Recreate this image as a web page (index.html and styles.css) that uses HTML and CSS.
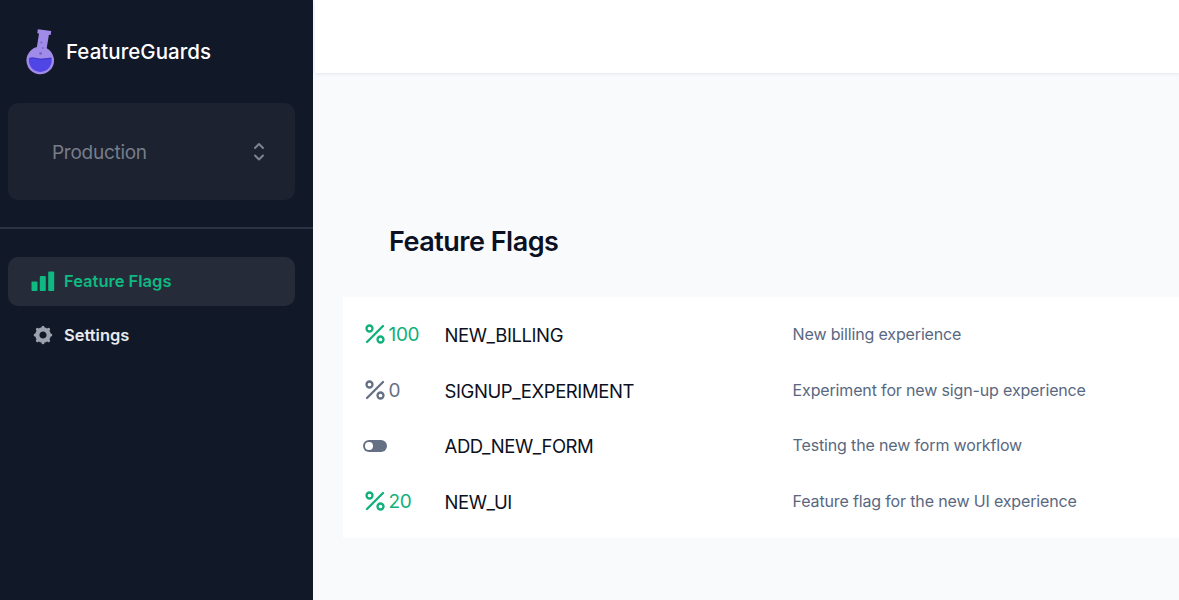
FILE: index.html
```html
<!DOCTYPE html>
<html lang="en">

<head>
    <meta charset="UTF-8">
    <meta name="viewport" content="width=device-width, initial-scale=1.0">
    <title>FeatureGuards</title>
    <link rel="stylesheet" href="styles.css">
</head>

<body>

    <!-- Icons shared by several rows -->
    <svg class="icon-defs" width="0" height="0">
        <symbol id="percent" viewBox="0 0 20 20">
            <g fill="none" stroke="currentColor" stroke-width="2.3" stroke-linecap="round">
                <circle cx="4.5" cy="4.5" r="3"/>
                <circle cx="15.5" cy="15.5" r="3"/>
                <path d="M2 18 18 2"/>
            </g>
        </symbol>
    </svg>

    <aside class="sidebar">
        <div class="brand">
            <svg class="brand-logo" width="30" height="48" viewBox="0 0 30 48">
                <path d="M11.8 1.3 25.2 3 24.7 6.9 22.9 6.8 20.7 20.300A13.800 13.800 0 1 1 10.900 19.100L13 5.600 11.300 5.300Z" fill="#a08be8"/>
                <path d="M3.200 30C7 28.500 10.500 30.200 14.500 30.700 18.500 31.200 22 29.300 25.400 30A11.400 11.400 0 1 1 3.200 30Z" fill="#5046e5"/>
                <path d="M3.200 30C7 28.500 10.500 30.200 14.500 30.700 18.500 31.200 22 29.300 25.400 30V31C21 30.500 18 32.500 14 31.700 10 31 7 30.300 3.200 31Z" fill="#4338ca"/>
                <circle cx="14.600" cy="25.500" r="1.400" fill="#7c5fd3"/>
                <circle cx="16.800" cy="20" r="0.900" fill="#7c5fd3"/>
                <circle cx="15.300" cy="14.500" r="0.900" fill="#7c5fd3"/>
            </svg>
            <span class="brand-name">FeatureGuards</span>
        </div>

        <div class="environment">
            <span>Production</span>
            <svg width="12" height="18" viewBox="0 0 12 18" fill="none" stroke="#7d838f" stroke-width="2" stroke-linecap="round" stroke-linejoin="round">
                <path d="M2 5 6 1 10 5M2 12.500 6 16.500 10 12.500"/>
            </svg>
        </div>

        <nav>
            <a class="active" href="#">
                <svg width="24" height="20" viewBox="0 0 24 20" fill="currentColor">
                    <rect x="0.500" y="10.500" width="6" height="9.500" rx="1"/>
                    <rect x="8.800" y="5" width="6" height="15" rx="1"/>
                    <rect x="17.200" y="0.500" width="6" height="19.500" rx="1"/>
                </svg>
                Feature Flags
            </a>
            <a href="#">
                <svg class="gear" width="24" height="20" viewBox="-12 -10 24 20">
                    <circle r="5.700" fill="none" stroke="currentColor" stroke-width="4.200"/>
                    <g stroke="currentColor" stroke-width="3" stroke-linecap="round">
                        <path d="M0-7.800V-7M0 7V7.800M-7.800 0H-7M7 0H7.800M-5.600-5.600-5-5M5 5 5.600 5.600M-5.600 5.600-5 5M5-5 5.600-5.600"/>
                    </g>
                </svg>
                Settings
            </a>
        </nav>
    </aside>

    <main>
        <header></header>
        <h1>Feature Flags</h1>

        <div class="flags">
            <div class="flag">
                <div class="status on"><svg class="percent"><use href="#percent"/></svg>100</div>
                <div class="name">NEW_BILLING</div>
                <div class="description">New billing experience</div>
            </div>
            <div class="flag">
                <div class="status"><svg class="percent"><use href="#percent"/></svg>0</div>
                <div class="name">SIGNUP_EXPERIMENT</div>
                <div class="description">Experiment for new sign-up experience</div>
            </div>
            <div class="flag">
                <div class="status">
                    <svg class="toggle" width="24" height="12" viewBox="0 0 24 12">
                        <rect width="24" height="12" rx="6" fill="currentColor"/>
                        <circle cx="6" cy="6" r="4" fill="#fff"/>
                    </svg>
                </div>
                <div class="name">ADD_NEW_FORM</div>
                <div class="description">Testing the new form workflow</div>
            </div>
            <div class="flag">
                <div class="status on"><svg class="percent"><use href="#percent"/></svg>20</div>
                <div class="name">NEW_UI</div>
                <div class="description">Feature flag for the new UI experience</div>
            </div>
        </div>
    </main>

</body>

</html>
```
FILE: styles.css
```css
* {
    box-sizing: border-box;
}

body {
    font-family: Inter, 'Liberation Sans', sans-serif;
    margin: 0;
    height: 600px;
    display: flex;
    overflow: hidden;
    background-color: #f9fafc;
    color: #0b1022;
}

.icon-defs {
    display: none;
}

.sidebar {
    width: 313px;
    flex-shrink: 0;
    background-color: #111827;
    color: #fff;
}

.brand {
    display: flex;
    align-items: center;
    height: 103px;
    padding-left: 26px;
}

.brand-logo {
    margin-right: 10px;
}

.brand-name {
    font-size: 20.5px;
    font-weight: 500;
    letter-spacing: 0.03px;
}

.environment {
    display: flex;
    align-items: center;
    justify-content: space-between;
    width: 287px;
    height: 97px;
    margin-left: 8px;
    padding: 0 30px 0 44px;
    border-radius: 10px;
    background-color: #1c2230;
    color: #777d8a;
    font-size: 19px;
    letter-spacing: -0.27px;
}

.environment span {
    padding-top: 2px;
}

nav {
    margin-top: 27px;
    padding: 28px 18px 0 8px;
    border-top: 2px solid #2b3445;
}

nav a {
    display: flex;
    align-items: center;
    gap: 9px;
    height: 49px;
    margin-bottom: 5px;
    padding: 0 0 1px 23px;
    border-radius: 10px;
    color: #e8eaee;
    font-size: 16.5px;
    font-weight: 600;
    text-decoration: none;
}

nav a.active {
    background-color: #252b39;
    color: #10b981;
}

.gear {
    color: #9ca3af;
}

main {
    flex: 1;
    min-width: 0;
    padding-left: 2px;
}

header {
    height: 73px;
    background-color: #fff;
    box-shadow: 0 1px 3px rgba(100, 116, 139, 0.15);
}

h1 {
    margin: 150px 0 0 74px;
    font-size: 27px;
    font-weight: 600;
    line-height: 38px;
    letter-spacing: -0.5px;
}

.flags {
    height: 241px;
    margin: 36px 0 0 28px;
    padding: 10px 0 8px 20px;
    background-color: #fff;
}

.flag {
    display: grid;
    grid-template-columns: 81.6px 348px 1fr;
    align-items: center;
    height: 55.7px;
}

.status {
    display: flex;
    align-items: center;
    color: #667085;
    font-size: 19px;
    letter-spacing: -0.3px;
}

.status.on {
    color: #10b07a;
}

.percent {
    width: 20px;
    height: 20px;
    margin: 0 3.5px 1.5px 2px;
}

.name {
    font-size: 18.5px;
    letter-spacing: -0.42px;
}

.description {
    padding-bottom: 2px;
    color: #596881;
    font-size: 16px;
    letter-spacing: -0.15px;
}
```
